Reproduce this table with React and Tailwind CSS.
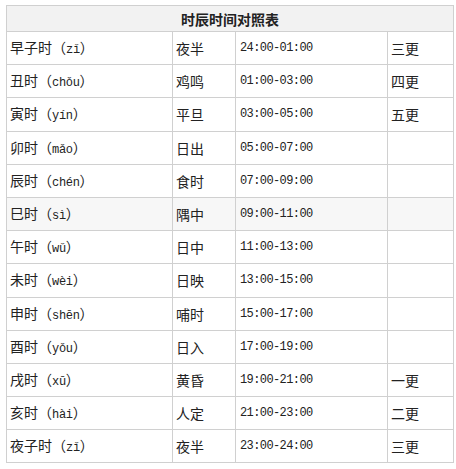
import React from "react";

const rows = [
  ["早子时", "zǐ", "夜半", "24:00-01:00", "三更"],
  ["丑时", "chǒu", "鸡鸣", "01:00-03:00", "四更"],
  ["寅时", "yín", "平旦", "03:00-05:00", "五更"],
  ["卯时", "mǎo", "日出", "05:00-07:00", ""],
  ["辰时", "chén", "食时", "07:00-09:00", ""],
  ["巳时", "sì", "隅中", "09:00-11:00", ""],
  ["午时", "wǔ", "日中", "11:00-13:00", ""],
  ["未时", "wèi", "日映", "13:00-15:00", ""],
  ["申时", "shēn", "哺时", "15:00-17:00", ""],
  ["酉时", "yǒu", "日入", "17:00-19:00", ""],
  ["戌时", "xū", "黄昏", "19:00-21:00", "一更"],
  ["亥时", "hài", "人定", "21:00-23:00", "二更"],
  ["夜子时", "zǐ", "夜半", "23:00-24:00", "三更"],
];

export default function App() {
  return (
    <div className="w-[456px] h-[469px] bg-white pt-[5px] pl-[6px] font-['Noto_Sans_CJK_SC',sans-serif] text-[#222]">
      <table className="border-collapse table-fixed w-[447px]">
        <colgroup>
          <col className="w-[166px]" />
          <col className="w-[63px]" />
          <col className="w-[152px]" />
          <col className="w-[66px]" />
        </colgroup>
        <thead>
          <tr className="h-[26px] bg-[#f2f2f2]">
            <th colSpan={4} className="border border-[#d0d0d0] text-[14px] font-bold text-center text-[#222] leading-none p-0">
              时辰时间对照表
            </th>
          </tr>
        </thead>
        <tbody>
          {rows.map((r, i) => (
            <tr key={i} className={i === 5 ? "h-[33.2px] bg-[#f7f7f7]" : "h-[33.2px]"}>
              <td className="border border-[#d0d0d0] pl-[3px] text-[14px] leading-none p-0">
                {r[0]}
                <span>（</span>
                <span className="font-['Liberation_Mono',monospace] text-[12px] tracking-[-0.3px]">{r[1]}</span>
                <span>）</span>
              </td>
              <td className="border border-[#d0d0d0] pl-[3px] text-[14px] leading-none p-0">{r[2]}</td>
              <td className="border border-[#d0d0d0] pl-[4px] font-['Liberation_Mono',monospace] text-[12px] tracking-[-0.6px] leading-none p-0">
                {r[3]}
              </td>
              <td className="border border-[#d0d0d0] pl-[3px] text-[14px] leading-none p-0">{r[4]}</td>
            </tr>
          ))}
        </tbody>
      </table>
    </div>
  );
}
